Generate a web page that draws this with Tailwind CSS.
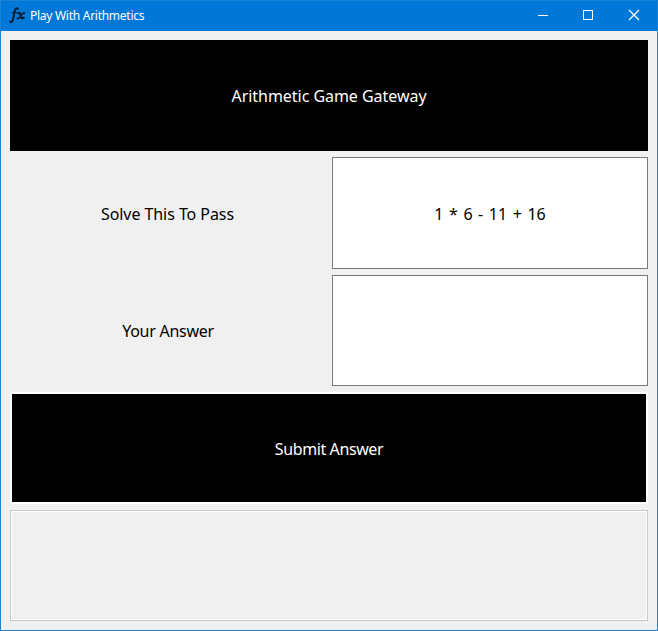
<!DOCTYPE html>
<html lang="en">
<head>
<meta charset="utf-8">
<title>Play With Arithmetics</title>
<script src="https://cdn.jsdelivr.net/npm/@tailwindcss/browser@4"></script>
</head>
<body class="overflow-hidden">
<div class="w-[658px] h-[631px] flex flex-col bg-[#f0f0f0] border border-[#1883d7] font-['Noto_Sans',sans-serif] text-[16px] leading-[20px] text-black">
  <header class="h-[30px] shrink-0 bg-[#0078d7] flex items-center text-white">
    <svg class="ml-[8px] mb-[3px] w-[17px] h-[18px] shrink-0" viewBox="0 0 17 18" fill="none" stroke="#0a1c2e" stroke-linecap="round">
      <path d="M8.8 2.8C7.2 1.2 6.2 3 5.7 5.2L4.1 13C3.6 15.6 2.2 16.8 .9 15.4" stroke-width="1.9"/>
      <path d="M3.2 6.6H7.6" stroke-width="1.2"/>
      <path d="M9 7.2C10.4 6 11 7 11.5 8.8C12.1 11.4 12.7 13.2 14.8 11.6" stroke-width="2"/>
      <path d="M15.6 7C13.6 6.2 12.7 8.6 11.7 10C10.7 11.8 9.6 13.2 8.2 12.4" stroke-width="1.5"/>
    </svg>
    <span class="ml-[4px] text-[12px] leading-[16px] tracking-[-0.27px] whitespace-nowrap">Play With Arithmetics</span>
    <div class="ml-auto flex h-full items-center pb-[2px] text-white">
      <span class="w-[45px] flex justify-end pr-[18px]"><svg class="w-[10px] h-[10px]" viewBox="0 0 10 10" shape-rendering="crispEdges"><path d="M0 5h10v1H0z" fill="#fff"/></svg></span>
      <span class="w-[45px] flex justify-end pr-[18px]"><span class="size-[10px] border border-white"></span></span>
      <span class="w-[46px] flex justify-center"><svg class="w-[10px] h-[10px] overflow-visible" viewBox="0 0 10 10" stroke="#fff" stroke-width="1.3"><path d="M0 0L10 10M10 0L0 10"/></svg></span>
    </div>
  </header>
  <main class="grow px-[9px] pt-[9px] flex flex-col gap-[6px] whitespace-nowrap">
    <div class="h-[111px] bg-black text-white flex items-center justify-center"><span class="tracking-[-0.04px]">Arithmetic Game Gateway</span></div>
    <div class="h-[112px] flex">
      <div class="w-[322px] pr-[7px] pt-[2px] flex items-center justify-center"><span class="tracking-[-0.06px]">Solve This To Pass</span></div>
      <div class="grow pt-[2px] bg-white border border-[#7a7a7a] flex items-center justify-center"><span class="[word-spacing:1.4px]">1 * 6 - 11 + 16</span></div>
    </div>
    <div class="h-[111px] flex">
      <div class="w-[322px] pr-[6px] flex items-center justify-center"><span class="tracking-[-0.27px]">Your Answer</span></div>
      <div class="grow bg-white border border-[#7a7a7a]"></div>
    </div>
    <button class="h-[112px] pt-[2px] bg-black border-2 border-white text-white flex items-center justify-center"><span class="tracking-[-0.4px]">Submit Answer</span></button>
    <div class="h-[111px] border border-[#c8c8c8] p-px bg-white"><div class="h-full bg-[#f0f0f0]"></div></div>
  </main>
</div>
</body>
</html>
